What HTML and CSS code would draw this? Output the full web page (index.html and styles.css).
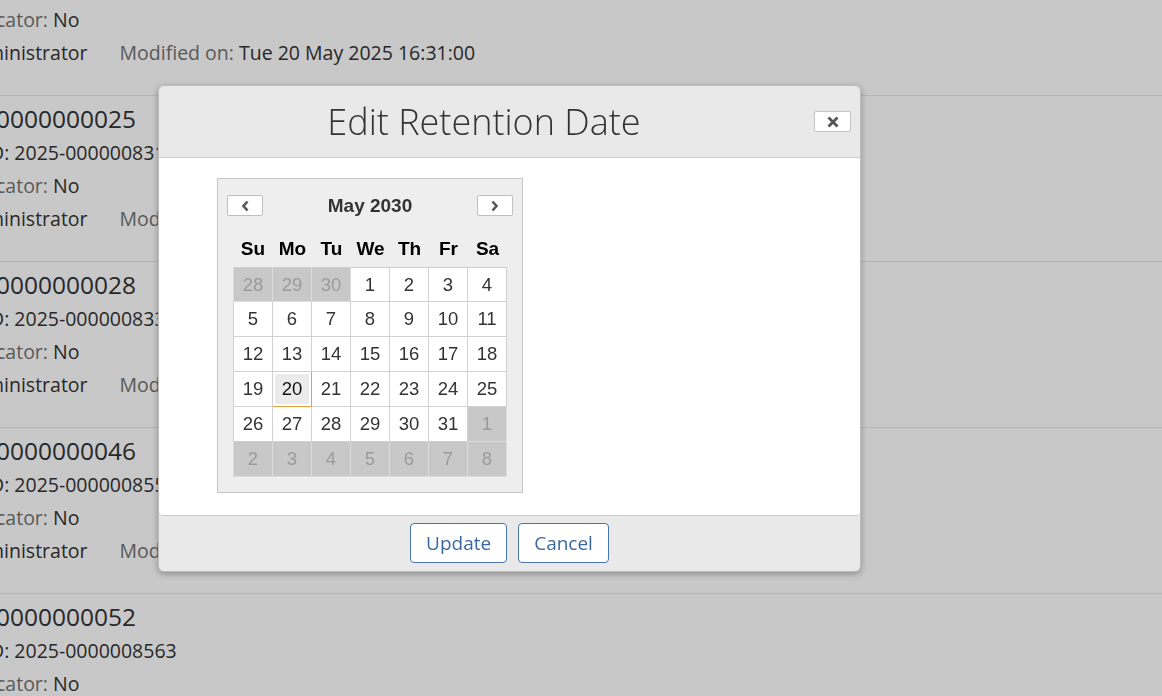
FILE: index.html
```html
<!DOCTYPE html>
<html lang="en">

<head>
    <meta charset="UTF-8">
    <meta name="viewport" content="width=device-width, initial-scale=1.0">
    <title>Records</title>
    <link rel="stylesheet" href="styles.css">
</head>

<body>
    <!-- Lista de registros (scrolled) -->
    <div class="list">
        <div class="record">
            <div class="title"><span class="cut">Record </span>0000000019</div>
            <div class="line"><span class="cut id">Record I</span>D: 2025-0000008302</div>
            <div class="line"><span class="cut"><span class="k">Vital Record Indi</span></span><span class="k">cator:</span> No</div>
            <div class="line"><span class="cut by"><span class="k">Created by:</span> Ad</span>ministrator<span class="mod"><span class="k">Modified on:</span> Tue 20 May 2025 16:31:00</span></div>
        </div>
        <div class="record">
            <div class="title"><span class="cut">Record </span>0000000025</div>
            <div class="line"><span class="cut id">Record I</span>D: 2025-0000008317</div>
            <div class="line"><span class="cut"><span class="k">Vital Record Indi</span></span><span class="k">cator:</span> No</div>
            <div class="line"><span class="cut by"><span class="k">Created by:</span> Ad</span>ministrator<span class="mod"><span class="k">Modified on:</span> Tue 20 May 2025 16:31:00</span></div>
        </div>
        <div class="record">
            <div class="title"><span class="cut">Record </span>0000000028</div>
            <div class="line"><span class="cut id">Record I</span>D: 2025-0000008331</div>
            <div class="line"><span class="cut"><span class="k">Vital Record Indi</span></span><span class="k">cator:</span> No</div>
            <div class="line"><span class="cut by"><span class="k">Created by:</span> Ad</span>ministrator<span class="mod"><span class="k">Modified on:</span> Tue 20 May 2025 16:31:00</span></div>
        </div>
        <div class="record">
            <div class="title"><span class="cut">Record </span>0000000046</div>
            <div class="line"><span class="cut id">Record I</span>D: 2025-0000008559</div>
            <div class="line"><span class="cut"><span class="k">Vital Record Indi</span></span><span class="k">cator:</span> No</div>
            <div class="line"><span class="cut by"><span class="k">Created by:</span> Ad</span>ministrator<span class="mod"><span class="k">Modified on:</span> Tue 20 May 2025 16:31:00</span></div>
        </div>
        <div class="record">
            <div class="title"><span class="cut">Record </span>0000000052</div>
            <div class="line"><span class="cut id">Record I</span>D: 2025-0000008563</div>
            <div class="line"><span class="cut"><span class="k">Vital Record Indi</span></span><span class="k">cator:</span> No</div>
        </div>
    </div>

    <div class="overlay"></div>

    <!-- Dialogo -->
    <div class="dialog">
        <div class="dialog-head">
            <h2>Edit Retention Date</h2>
            <button type="button" class="close" title="Close">
                <svg width="12" height="12" viewBox="0 0 12 12"><path d="M1.5 1.5 L10.5 10.5 M10.5 1.5 L1.5 10.5" stroke="#555" stroke-width="2.8" fill="none"/></svg>
            </button>
        </div>

        <div class="dialog-body">
            <div class="cal">
                <div class="cal-nav">
                    <button type="button" class="nav-btn" title="Prev">
                        <svg width="9" height="12" viewBox="0 0 9 12"><path d="M6.5 1.5 L2.5 6 L6.5 10.5" stroke="#555" stroke-width="2.6" fill="none"/></svg>
                    </button>
                    <span class="cal-month">May 2030</span>
                    <button type="button" class="nav-btn" title="Next">
                        <svg width="9" height="12" viewBox="0 0 9 12"><path d="M2.5 1.5 L6.5 6 L2.5 10.5" stroke="#555" stroke-width="2.6" fill="none"/></svg>
                    </button>
                </div>
                <table class="cal-grid">
                    <thead>
                        <tr><th>Su</th><th>Mo</th><th>Tu</th><th>We</th><th>Th</th><th>Fr</th><th>Sa</th></tr>
                    </thead>
                    <tbody>
                        <tr><td class="other">28</td><td class="other">29</td><td class="other">30</td><td>1</td><td>2</td><td>3</td><td>4</td></tr>
                        <tr><td>5</td><td>6</td><td>7</td><td>8</td><td>9</td><td>10</td><td>11</td></tr>
                        <tr><td>12</td><td>13</td><td>14</td><td>15</td><td>16</td><td>17</td><td>18</td></tr>
                        <tr><td>19</td><td class="active">20</td><td>21</td><td>22</td><td>23</td><td>24</td><td>25</td></tr>
                        <tr><td>26</td><td>27</td><td>28</td><td>29</td><td>30</td><td>31</td><td class="other">1</td></tr>
                        <tr><td class="other">2</td><td class="other">3</td><td class="other">4</td><td class="other">5</td><td class="other">6</td><td class="other">7</td><td class="other">8</td></tr>
                    </tbody>
                </table>
            </div>
        </div>

        <div class="dialog-foot">
            <button type="button" class="btn">Update</button>
            <button type="button" class="btn">Cancel</button>
        </div>
    </div>
</body>

</html>
```

FILE: styles.css
```css
/* General */
body {
    font-family: 'Open Sans', 'Liberation Sans', sans-serif;
    margin: 0;
    background: #fff;
    color: #333;
    overflow: hidden;
}

/* Registros */
.list {
    margin-top: -70px;
    margin-left: -204px;
}

.record {
    padding: 6px 0 26px;
    border-bottom: 1px solid #e6e6e6;
}

.title {
    font-size: 24.5px;
    line-height: 34px;
    white-space: nowrap;
}

.line {
    font-size: 19.5px;
    line-height: 33px;
    white-space: nowrap;
}

.cut {
    display: inline-block;
    width: 200px;
    text-align: right;
    overflow: hidden;
    vertical-align: top;
}

.cut.id {
    width: 194px;
}

.cut.by {
    width: 190px;
}

.k {
    color: #737373;
}

.mod {
    margin-left: 32px;
}

.overlay {
    position: fixed;
    top: 0;
    left: 0;
    right: 0;
    bottom: 0;
    background: rgba(0, 0, 0, 0.215);
}

/* Dialogo */
.dialog {
    position: fixed;
    left: 158px;
    top: 85px;
    width: 703px;
    box-sizing: border-box;
    background: #e9e9e9;
    border: 1px solid #bdbdbd;
    border-radius: 6px;
    box-shadow: 0 2px 6px rgba(0, 0, 0, 0.3);
}

.dialog-head {
    display: flex;
    align-items: center;
    height: 72px;
    box-sizing: border-box;
    padding-right: 9px;
    border-bottom: 1px solid #cdcdcd;
}

.dialog-head h2 {
    flex: 1;
    margin: 0;
    text-align: center;
    font-size: 36px;
    font-weight: 300;
    color: #333;
}

.close {
    width: 37px;
    height: 21px;
    margin-left: 5px;
    padding: 0;
    display: flex;
    align-items: center;
    justify-content: center;
    background: #fff;
    border: 1px solid #c4c4c4;
    border-radius: 2px;
}

.dialog-body {
    height: 358px;
    box-sizing: border-box;
    padding: 20px 0 0 58px;
    background: #fff;
    border-bottom: 1px solid #c9c9c9;
    border-radius: 0 0 4px 4px;
}

/* Calendario */
.cal {
    width: 306px;
    box-sizing: border-box;
    padding: 16px 15px 15px;
    background: #eee;
    border: 1px solid #c6c6c6;
    font-family: 'Liberation Sans', Arial, sans-serif;
}

.cal-nav {
    display: flex;
    align-items: center;
    justify-content: space-between;
    margin: 0 -6px 14px;
    height: 21px;
}

.nav-btn {
    width: 36px;
    height: 21px;
    padding: 0;
    display: flex;
    align-items: center;
    justify-content: center;
    background: #fff;
    border: 1px solid #bfbfbf;
    border-radius: 2px;
}

.cal-month {
    font-size: 19px;
    font-weight: bold;
    color: #333;
}

.cal-grid {
    width: 274px;
    border-collapse: separate;
    border-spacing: 0;
    table-layout: fixed;
}

.cal-grid th {
    height: 37px;
    padding: 0;
    font-size: 19px;
    font-weight: bold;
    color: #000;
    text-align: center;
}

.cal-grid th:first-child {
    width: 40px;
}

.cal-grid td {
    height: 34px;
    padding: 0;
    text-align: center;
    font-size: 18.5px;
    line-height: 20px;
    color: #333;
    background: #fff;
    border-right: 1px solid #d0d0d0;
    border-bottom: 1px solid #d0d0d0;
}

.cal-grid td:first-child {
    border-left: 1px solid #d0d0d0;
}

.cal-grid tbody tr:first-child td {
    border-top: 1px solid #d0d0d0;
    height: 33px;
}

.cal-grid td.other {
    background: #c8c8c8;
    color: #9b9b9b;
    border-color: #dcdcdc;
}

.cal-grid td.active {
    background: #ebebeb;
    color: #111;
    box-shadow: inset 0 0 0 2px #fff;
    border-right-color: #eba13a;
    border-bottom-color: #eba13a;
}

/* Botones */
.dialog-foot {
    display: flex;
    justify-content: center;
    gap: 11px;
    height: 55px;
    padding-top: 7px;
    box-sizing: border-box;
}

.btn {
    height: 40px;
    padding: 0 15px;
    font-family: 'Open Sans', sans-serif;
    font-size: 19px;
    color: #3a68a5;
    background: #fff;
    border: 1px solid #4a74ad;
    border-radius: 4px;
}
```
